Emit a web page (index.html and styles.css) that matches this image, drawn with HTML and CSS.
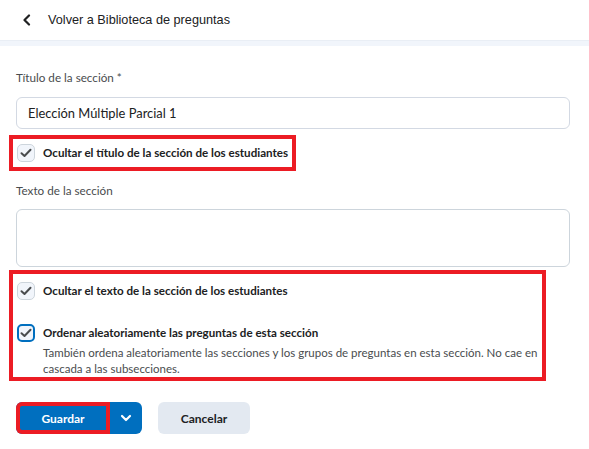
FILE: index.html
```html
<!DOCTYPE html>
<html lang="es">
<head>
<meta charset="utf-8">
<link rel="stylesheet" href="styles.css">
</head>
<body>
<header class="topbar">
  <svg class="back" width="10" height="12" viewBox="0 0 10 12"><path d="M7 1.5 L2.5 6 L7 10.5" fill="none" stroke="#202122" stroke-width="2.2" stroke-linecap="round" stroke-linejoin="round"/></svg>
  <span class="back-text">Volver a Biblioteca de preguntas</span>
</header>
<div class="band"></div>
<main class="form">
  <div class="label first">Título de la sección *</div>
  <div class="input">Elección Múltiple Parcial 1</div>
  <div class="mark mark-one">
    <div class="row">
      <span class="cb"><svg width="12" height="10" viewBox="0 0 12 10"><path d="M1.5 5.2 L4.5 8 L10.5 1.8" fill="none" stroke="#494c4e" stroke-width="2" stroke-linecap="round" stroke-linejoin="round"/></svg></span>
      <span class="cb-text">Ocultar el título de la sección de los estudiantes</span>
    </div>
  </div>
  <div class="label second">Texto de la sección</div>
  <div class="textarea"></div>
  <div class="mark mark-two">
    <div class="row">
      <span class="cb"><svg width="12" height="10" viewBox="0 0 12 10"><path d="M1.5 5.2 L4.5 8 L10.5 1.8" fill="none" stroke="#494c4e" stroke-width="2" stroke-linecap="round" stroke-linejoin="round"/></svg></span>
      <span class="cb-text">Ocultar el texto de la sección de los estudiantes</span>
    </div>
    <div class="row row-top">
      <span class="cb cb-focus"><svg width="12" height="10" viewBox="0 0 12 10"><path d="M1.5 5.2 L4.5 8 L10.5 1.8" fill="none" stroke="#494c4e" stroke-width="2" stroke-linecap="round" stroke-linejoin="round"/></svg></span>
      <div class="cb-body">
        <span class="cb-text">Ordenar aleatoriamente las preguntas de esta sección</span>
        <p class="desc">También ordena aleatoriamente las secciones y los grupos de preguntas en esta sección. No cae en cascada a las subsecciones.</p>
      </div>
    </div>
  </div>
  <div class="actions">
    <div class="split">
      <button class="btn-primary">Guardar</button>
      <button class="btn-drop"><svg width="12" height="8" viewBox="0 0 12 8"><path d="M2 2 L6 6 L10 2" fill="none" stroke="#ffffff" stroke-width="2.2" stroke-linecap="round" stroke-linejoin="round"/></svg></button>
    </div>
    <button class="btn-secondary">Cancelar</button>
  </div>
</main>
</body>
</html>
```
FILE: styles.css
```css
* { box-sizing: border-box; }
html, body { margin: 0; padding: 0; background: #ffffff; }
body { font-family: Lato, "Noto Sans", sans-serif; color: #202122; width: 589px; height: 449px; overflow: hidden; }

.topbar { height: 40px; display: flex; align-items: center; padding-left: 22px; }
.back { display: block; margin-right: 16px; }
.back-text { font-family: "Liberation Sans", Arial, sans-serif; font-size: 12.7px; color: #202122; }
.band { height: 6px; background: #f1f5fb; border-top: 1px solid #e9eef5; }

.form { padding: 0 19px 0 16px; }
.label { font-size: 11.7px; line-height: 16px; color: #494c4e; }
.label.first { margin-top: 23px; }
.label.second { margin-top: 11px; }

.input { margin-top: 12px; height: 32px; border: 1px solid #d3d9e3; border-radius: 6px; padding: 0 11px; font-size: 12.9px; line-height: 30px; color: #202122; }
.textarea { margin-top: 11px; height: 58px; border: 1.5px solid #cdd5dc; border-radius: 6px; }

.mark { border: 4px solid #ec1c24; margin-left: -7px; }
.mark-one { width: 287px; height: 36px; margin-top: 6px; display: flex; align-items: center; padding-left: 4px; }
.mark-two { width: 537px; margin-top: 3px; padding: 8px 0 0 4px; }

.row { display: flex; align-items: center; }
.row-top { align-items: flex-start; margin-top: 24px; }
.cb { width: 18px; height: 18px; flex: none; border: 1px solid #cdd5dc; border-radius: 5px; background: #f1f5fb; display: flex; align-items: center; justify-content: center; margin-right: 8px; }
.cb-focus { border: 2px solid #006fbf; }
.cb-text { font-size: 11.6px; font-weight: 700; color: #202122; line-height: 18px; }
.cb-body { display: flex; flex-direction: column; flex: none; width: 499px; }
.desc { margin: 3px 0 0 0; font-size: 11.5px; line-height: 16px; color: #494c4e; }

.actions { margin-top: 21px; display: flex; align-items: center; gap: 16px; }
.split { display: flex; }
button { font-family: Lato, "Noto Sans", sans-serif; border: none; cursor: pointer; }
.btn-primary { width: 94px; height: 32px; background: #006fbf; color: #ffffff; font-size: 12px; font-weight: 700; border-radius: 6px 0 0 6px; box-shadow: inset 0 0 0 4px #ec1c24; padding: 0; }
.btn-drop { width: 32px; height: 32px; background: #006fbf; border-radius: 0 6px 6px 0; display: flex; align-items: center; justify-content: center; padding: 0; }
.btn-secondary { width: 92px; height: 32px; background: #e3e9f1; color: #202122; font-size: 12px; font-weight: 700; border-radius: 6px; padding: 0; }
```
